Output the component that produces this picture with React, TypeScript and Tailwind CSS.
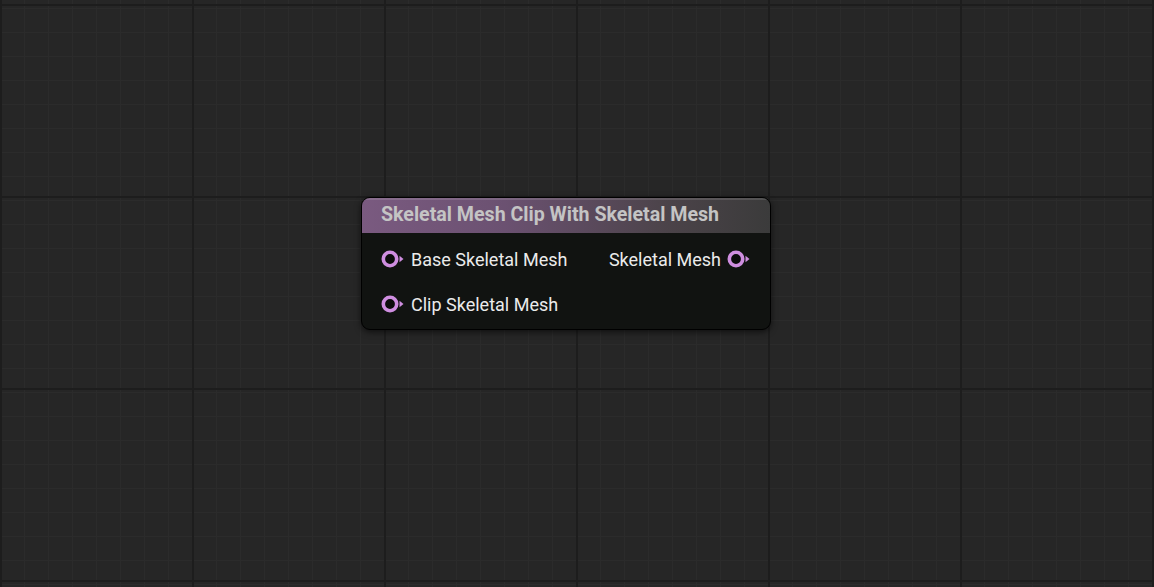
import React from "react";

type PinProps = { label: string; side: "in" | "out" };

const PinIcon = () => (
  <svg width="23" height="18" viewBox="0 0 23 18" className="shrink-0">
    <circle cx="9" cy="9" r="6.7" fill="#0c0c0c" stroke="#cf8ee0" strokeWidth="3.6" />
    <path d="M18.5 5.8 L22.5 9 L18.5 12.2 Z" fill="#cf8ee0" />
  </svg>
);

const Pin = ({ label, side }: PinProps) =>
  side === "in" ? (
    <div className="flex items-center gap-[7px] h-[22px]">
      <PinIcon />
      <span>{label}</span>
    </div>
  ) : (
    <div className="flex items-center gap-[6px] h-[22px]">
      <span>{label}</span>
      <PinIcon />
    </div>
  );

const GridBackground = () => (
  <svg className="absolute inset-0 w-full h-full" xmlns="http://www.w3.org/2000/svg">
    <defs>
      <pattern id="minor" x="0" y="4" width="24" height="24" patternUnits="userSpaceOnUse">
        <path d="M0 0.5 H24 M0.5 0 V24" stroke="#2b2b2b" strokeWidth="1" fill="none" />
      </pattern>
      <pattern id="major" x="0" y="4" width="192" height="192" patternUnits="userSpaceOnUse">
        <rect width="192" height="192" fill="url(#minor)" />
        <path d="M0 1 H192 M1 0 V192" stroke="#1d1d1d" strokeWidth="2" fill="none" />
      </pattern>
    </defs>
    <rect width="100%" height="100%" fill="#262626" />
    <rect width="100%" height="100%" fill="url(#major)" />
  </svg>
);

export default function App() {
  return (
    <div
      className="relative w-[1154px] h-[587px] overflow-hidden bg-[#262626]"
      style={{ fontFamily: "Roboto, 'Liberation Sans', sans-serif" }}
    >
      <GridBackground />

      {/* node */}
      <div className="absolute left-[361px] top-[197px] w-[410px] rounded-[9px] border border-black bg-[#111311] shadow-[0_2px_6px_rgba(0,0,0,0.6)] overflow-hidden">
        <div className="h-[35px] flex items-center pl-[19px] bg-[linear-gradient(90deg,#7a5a80_0%,#6b5171_35%,#4b4349_75%,#3b3b3b_100%)] shadow-[inset_0_2px_0_rgba(255,255,255,0.12)]">
          <span className="text-[19.6px] font-bold text-[#c4c4c4] leading-none -mt-[1px]">
            Skeletal Mesh Clip With Skeletal Mesh
          </span>
        </div>
        <div className="flex justify-between pl-[19px] pr-[20px] pt-[15px] pb-[14px] text-[18px] text-[#ebebeb]">
          <div className="flex flex-col gap-[23px]">
            <Pin label="Base Skeletal Mesh" side="in" />
            <Pin label="Clip Skeletal Mesh" side="in" />
          </div>
          <div className="flex flex-col">
            <Pin label="Skeletal Mesh" side="out" />
          </div>
        </div>
      </div>
    </div>
  );
}
